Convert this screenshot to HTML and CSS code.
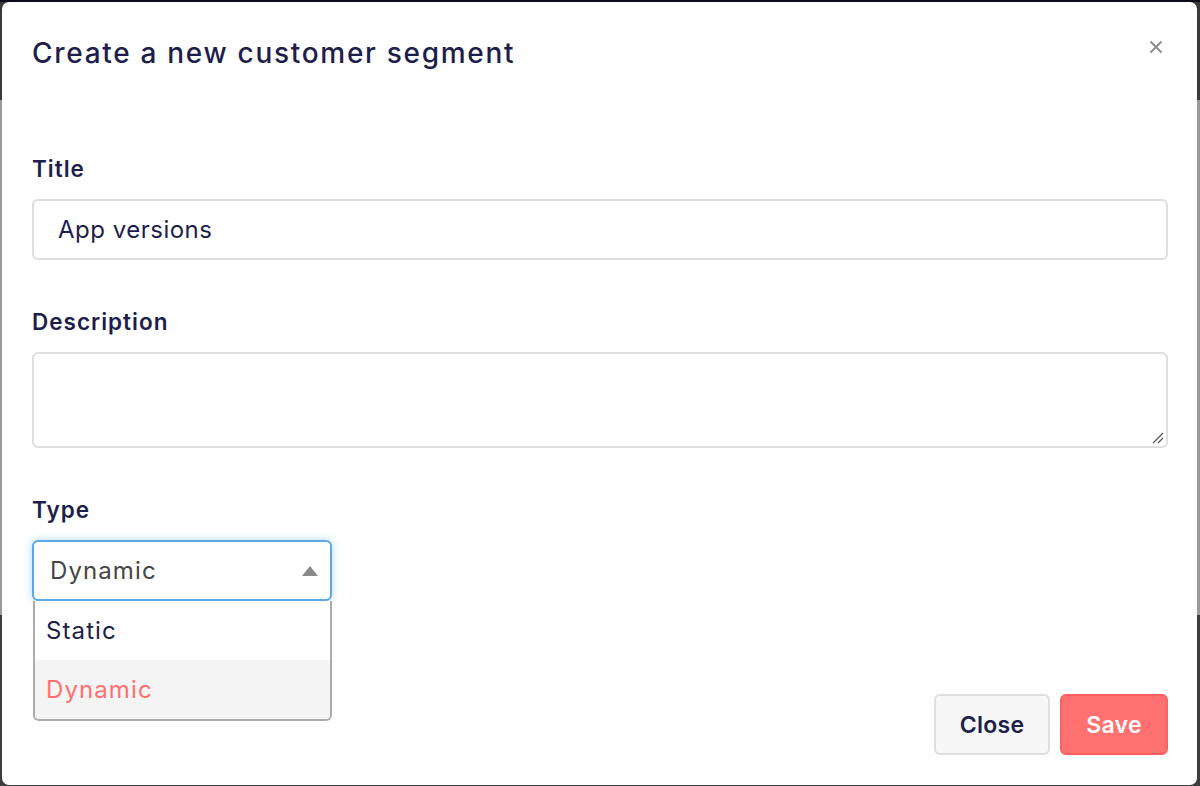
FILE: index.html
```html
<!DOCTYPE html>
<html>
<head>
<meta charset="utf-8">
<link rel="stylesheet" href="styles.css">
</head>
<body>
<div class="backdrop">
  <div class="modal">
    <div class="modal-header">
      <h2 class="modal-title">Create a new customer segment</h2>
      <button class="close-x" aria-label="Close">
        <svg width="14" height="14" viewBox="0 0 14 14"><path d="M1.5 1.5 L12.5 12.5 M12.5 1.5 L1.5 12.5" stroke="#8a8a8a" stroke-width="1.8" fill="none"/></svg>
      </button>
    </div>
    <div class="modal-body">
      <div class="field">
        <label class="label">Title</label>
        <div class="input">App versions</div>
      </div>
      <div class="field">
        <label class="label">Description</label>
        <div class="textarea">
          <svg class="grip" width="12" height="12" viewBox="0 0 12 12"><path d="M1 11 L11 1 M6 11 L11 6" stroke="#555" stroke-width="1.2" fill="none"/></svg>
        </div>
      </div>
      <div class="field">
        <label class="label">Type</label>
        <div class="select-wrap">
          <div class="select">
            <span>Dynamic</span>
            <svg width="16" height="10" viewBox="0 0 16 10"><path d="M8 0 L16 10 L0 10 Z" fill="#8a8a8a"/></svg>
          </div>
          <ul class="options">
            <li class="option">Static</li>
            <li class="option selected">Dynamic</li>
          </ul>
        </div>
      </div>
    </div>
    <div class="modal-footer">
      <button class="btn btn-light">Close</button>
      <button class="btn btn-primary">Save</button>
    </div>
  </div>
</div>
</body>
</html>
```
FILE: styles.css
```css
* { box-sizing: border-box; }
html, body { margin: 0; padding: 0; }
body {
  width: 1200px;
  height: 786px;
  overflow: hidden;
  font-family: "Inter", "Noto Sans", sans-serif;
  color: #1d1e4b;
  background: linear-gradient(to bottom, #0b0b1e 0px, #0b0b1e 2px, #3a3a3e 2px, #3a3a3e 100px, #9a9a9a 100px, #9a9a9a 615px, #3d3d3d 615px);
}
.backdrop {
  height: 786px;
  padding: 2px 3px 1px 2px;
}
.modal {
  height: 100%;
  background: #fff;
  border-radius: 7px;
  display: flex;
  flex-direction: column;
  position: relative;
}
.modal-header {
  display: flex;
  align-items: flex-start;
  justify-content: space-between;
  padding: 31px 34px 0 30px;
  height: 153px;
}
.modal-title {
  margin: 0;
  font-size: 28px;
  line-height: 40px;
  font-weight: 500;
  letter-spacing: 1.7px;
  color: #1d1e4b;
}
.close-x {
  border: 0;
  background: none;
  padding: 0;
  margin-top: 7px;
  width: 14px;
  height: 14px;
  display: flex;
}
.modal-body {
  padding: 0 29px 0 30px;
  display: flex;
  flex-direction: column;
  gap: 48px;
}
.field {
  display: flex;
  flex-direction: column;
}
.label {
  font-size: 22.5px;
  line-height: 28px;
  font-weight: 600;
  letter-spacing: 1px;
  color: #1d1e4b;
  margin-bottom: 16px;
}
.input, .textarea, .select {
  border: 2px solid #dedede;
  border-radius: 6px;
  background: #fff;
}
.input {
  height: 61px;
  padding: 0 24px;
  display: flex;
  align-items: center;
  font-size: 24px;
  letter-spacing: 0.5px;
  color: #1d1e4b;
}
.textarea {
  height: 96px;
  position: relative;
}
.grip {
  position: absolute;
  right: 2px;
  bottom: 2px;
}
.select-wrap {
  position: relative;
  width: 300px;
}
.select {
  height: 61px;
  border: 2px solid #5aa9e6;
  box-shadow: 0 0 8px rgba(90, 169, 230, 0.45);
  display: flex;
  align-items: center;
  justify-content: space-between;
  padding: 0 12px 0 16px;
  font-size: 24px;
  letter-spacing: 1.1px;
  color: #454545;
}
.options {
  position: absolute;
  top: 61px;
  left: 1px;
  right: 0;
  margin: 0;
  padding: 0;
  list-style: none;
  border: 2px solid #ababab;
  border-top: 0;
  border-radius: 0 0 6px 6px;
  background: #fff;
  overflow: hidden;
}
.option {
  height: 59px;
  display: flex;
  align-items: center;
  padding-left: 11px;
  font-size: 24px;
  letter-spacing: 1.1px;
  color: #1d1e4b;
}
.option.selected {
  background: #f4f4f4;
  color: #ff7070;
}
.modal-footer {
  margin-top: auto;
  display: flex;
  justify-content: flex-end;
  gap: 10px;
  padding: 0 29px 30px 0;
}
.btn {
  height: 61px;
  border-radius: 6px;
  font-family: inherit;
  font-size: 23px;
  font-weight: 600;
  letter-spacing: 0.3px;
  padding: 0;
}
.btn-light {
  background: #f7f7f7;
  border: 2px solid #dedede;
  color: #1d1e4b;
  width: 116px;
}
.btn-primary {
  background: #ff7070;
  border: 2px solid #ff5f5f;
  color: #fff;
  width: 108px;
}
```
